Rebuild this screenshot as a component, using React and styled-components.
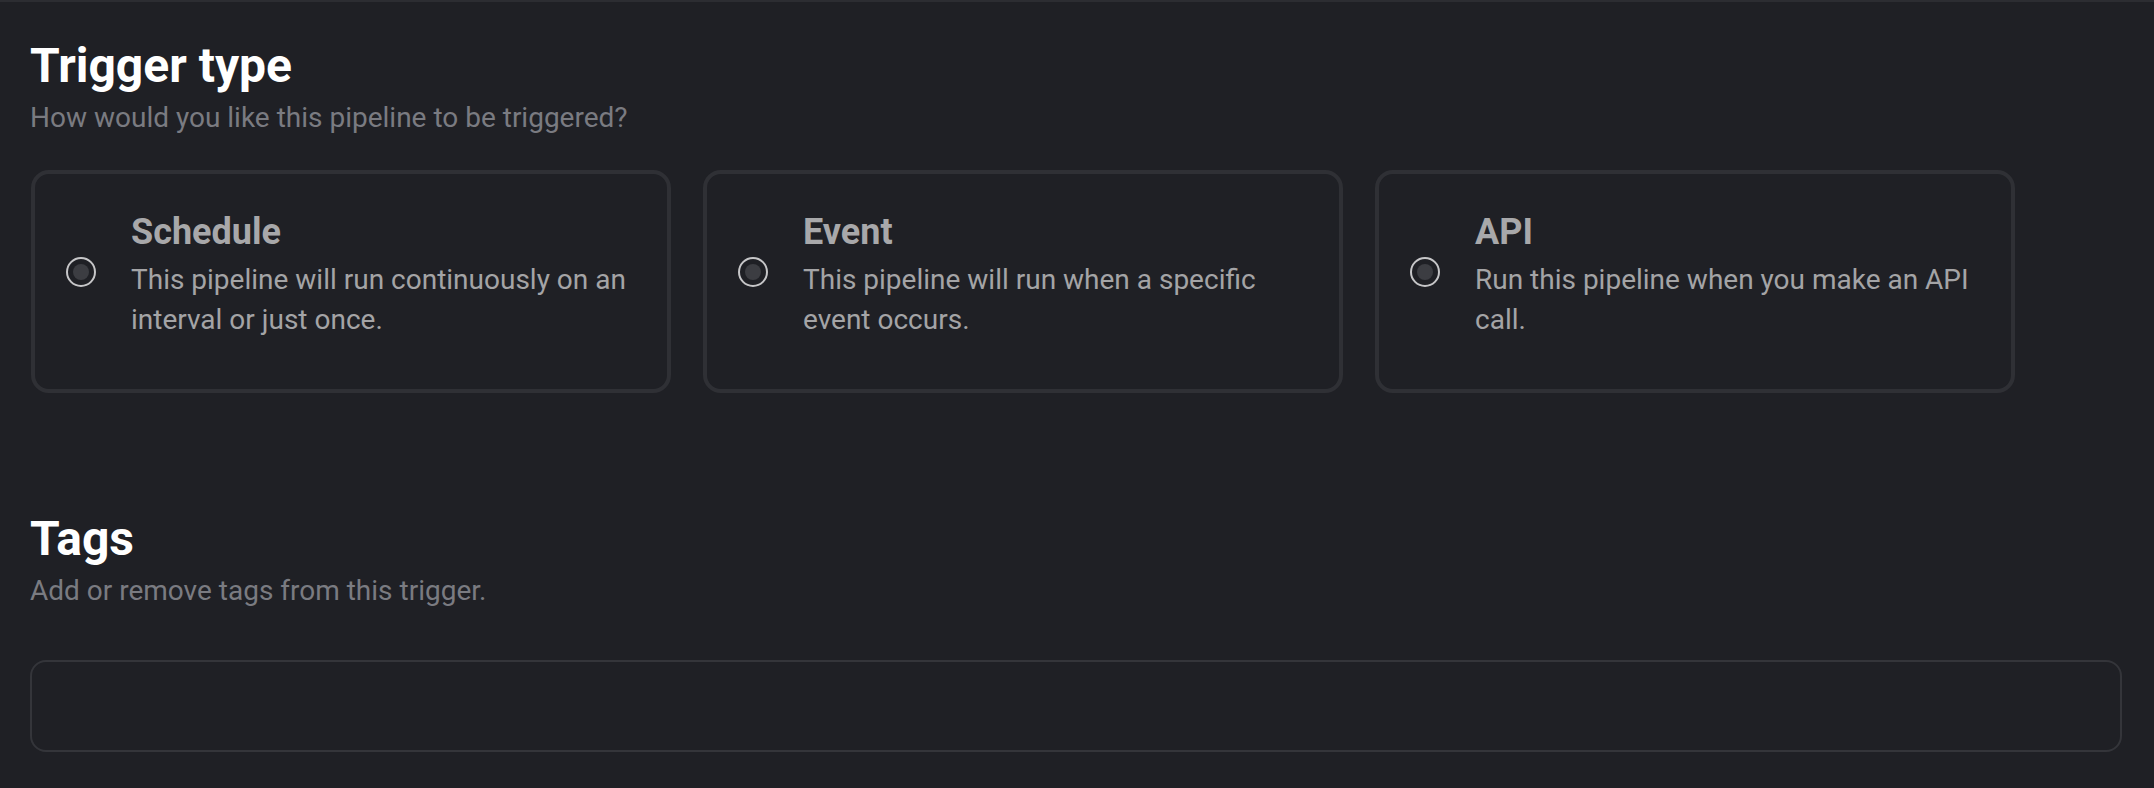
import React from "react";
import styled, { createGlobalStyle } from "styled-components";

const Global = createGlobalStyle`
  html, body {
    margin: 0;
    padding: 0;
    background: #1f2025;
  }
  body {
    font-family: Roboto, "Noto Sans", "Liberation Sans", sans-serif;
  }
  * { box-sizing: border-box; }
`;

const Page = styled.div`
  min-height: 788px;
  background: #1f2025;
  border-top: 2px solid #2c2d32;
  padding: 32px 32px 0 30px;
`;

const Section = styled.section`
  display: flex;
  flex-direction: column;
  & + & {
    margin-top: 114px;
  }
`;

const Heading = styled.h2`
  margin: 0;
  font-size: 48px;
  line-height: 64px;
  font-weight: 700;
  color: #ffffff;
`;

const Sub = styled.p`
  margin: 0;
  font-size: 28px;
  line-height: 40px;
  font-weight: 400;
  color: #7a7b81;
`;

const CardGrid = styled.div`
  display: grid;
  grid-template-columns: repeat(3, 640px);
  gap: 32px;
  margin-top: 32px;
  padding-left: 1px;
`;

const Card = styled.label`
  display: flex;
  align-items: center;
  gap: 35px;
  border: 4px solid #2f3035;
  border-radius: 18px;
  padding: 30px 31px 49px 31px;
  cursor: pointer;
`;

const Radio = styled.span`
  flex: none;
  width: 30px;
  height: 30px;
  border-radius: 50%;
  border: 2px solid #c6c6c8;
  display: flex;
  align-items: center;
  justify-content: center;
  &::after {
    content: "";
    width: 16px;
    height: 16px;
    border-radius: 50%;
    background: #3c3d42;
  }
`;

const CardText = styled.div`
  display: flex;
  flex-direction: column;
  flex: 1;
  min-width: 0;
`;

const CardTitle = styled.span`
  font-size: 36px;
  line-height: 56px;
  font-weight: 700;
  color: #a8a8aa;
`;

const CardBody = styled.span`
  font-size: 28px;
  line-height: 40px;
  font-weight: 400;
  color: #a4a4a6;
`;

const TagsInput = styled.div`
  margin-top: 49px;
  height: 92px;
  border: 2px solid #34353a;
  border-radius: 16px;
`;

const options = [
  {
    title: "Schedule",
    body: "This pipeline will run continuously on an interval or just once.",
  },
  {
    title: "Event",
    body: "This pipeline will run when a specific event occurs.",
  },
  {
    title: "API",
    body: "Run this pipeline when you make an API call.",
  },
];

export default function App() {
  return (
    <>
      <Global />
      <Page>
        <Section>
          <Heading>Trigger type</Heading>
          <Sub>How would you like this pipeline to be triggered?</Sub>
          <CardGrid>
            {options.map((o) => (
              <Card key={o.title}>
                <Radio />
                <CardText>
                  <CardTitle>{o.title}</CardTitle>
                  <CardBody>{o.body}</CardBody>
                </CardText>
              </Card>
            ))}
          </CardGrid>
        </Section>
        <Section>
          <Heading>Tags</Heading>
          <Sub>Add or remove tags from this trigger.</Sub>
          <TagsInput />
        </Section>
      </Page>
    </>
  );
}
